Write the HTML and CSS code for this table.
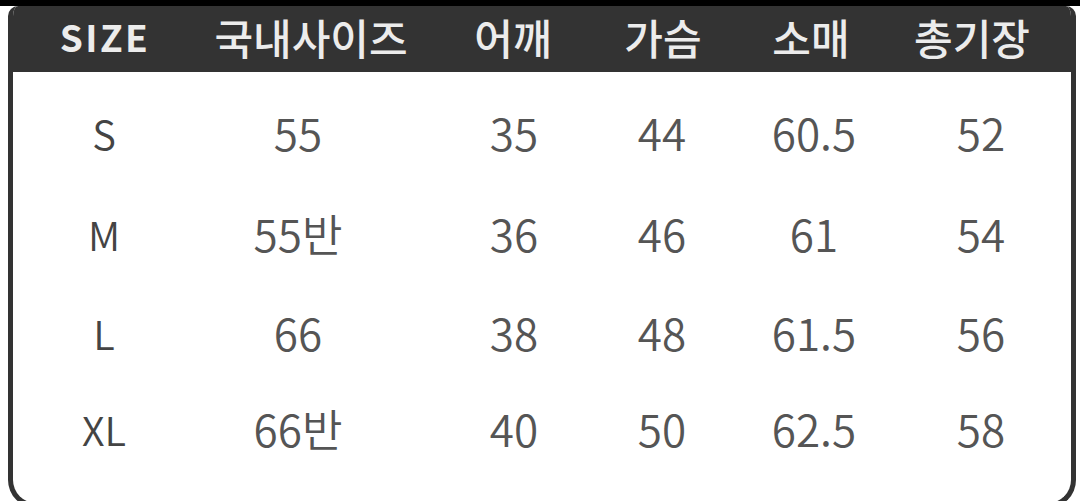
FILE: index.html
```html
<!DOCTYPE html>
<html lang="ko">
<head>
<meta charset="utf-8">
<title>Size chart</title>
<link rel="stylesheet" href="styles.css">
</head>
<body>
<div class="topbar"></div>
<div class="chart">
  <div class="head">
    <div class="hcell size">SIZE</div>
    <div class="hcell">국내사이즈</div>
    <div class="hcell">어깨</div>
    <div class="hcell">가슴</div>
    <div class="hcell">소매</div>
    <div class="hcell">총기장</div>
  </div>
  <div class="rows">
    <div class="row">
      <div class="cell label">S</div>
      <div class="cell">55</div>
      <div class="cell">35</div>
      <div class="cell">44</div>
      <div class="cell">60.5</div>
      <div class="cell">52</div>
    </div>
    <div class="row">
      <div class="cell label">M</div>
      <div class="cell">55반</div>
      <div class="cell">36</div>
      <div class="cell">46</div>
      <div class="cell">61</div>
      <div class="cell">54</div>
    </div>
    <div class="row">
      <div class="cell label">L</div>
      <div class="cell">66</div>
      <div class="cell">38</div>
      <div class="cell">48</div>
      <div class="cell">61.5</div>
      <div class="cell">56</div>
    </div>
    <div class="row">
      <div class="cell label">XL</div>
      <div class="cell">66반</div>
      <div class="cell">40</div>
      <div class="cell">50</div>
      <div class="cell">62.5</div>
      <div class="cell">58</div>
    </div>
  </div>
</div>
</body>
</html>
```

FILE: styles.css
```css
html, body {
  margin: 0;
  padding: 0;
  background: #ffffff;
  overflow: hidden;
}

body {
  width: 1080px;
  height: 501px;
  font-family: "Noto Sans CJK KR", "Noto Sans", sans-serif;
}

.topbar {
  height: 6px;
  background: #000000;
}

.chart {
  margin-left: 8px;
  width: 1058px;
  height: 497px;
  border: 5px solid #333333;
  border-top: 0;
  border-radius: 10px 10px 28px 28px;
  overflow: hidden;
  background: #ffffff;
}

.head {
  box-sizing: border-box;
  height: 66px;
  margin: 0 -5px;
  background: #333333;
  border-radius: 10px 10px 0 0;
  display: grid;
  grid-template-columns: 27px 140px 66px 140px 62px 140px 10px 140px 8px 140px 21px 140px;
  align-items: start;
}

.hcell {
  justify-self: center;
  color: #ececec;
  font-size: 42px;
  font-weight: 500;
  white-space: nowrap;
  line-height: normal;
}

.hcell.size {
  font-size: 37px;
  font-weight: 700;
  letter-spacing: 2.5px;
  padding-top: 3px;
}

.head .hcell:nth-child(1) { grid-column: 2; }
.head .hcell:nth-child(2) { grid-column: 4; }
.head .hcell:nth-child(3) { grid-column: 6; }
.head .hcell:nth-child(4) { grid-column: 8; }
.head .hcell:nth-child(5) { grid-column: 10; }
.head .hcell:nth-child(6) { grid-column: 12; }

.rows {
  padding-top: 11px;
  display: grid;
  grid-template-rows: 100px 102px 96px 96px;
}

.row {
  display: grid;
  grid-template-columns: 21px 140px 54px 140px 76px 140px 8px 140px 12px 140px 27px 140px;
  align-items: center;
}

.cell {
  justify-self: center;
  color: #555555;
  font-size: 44px;
  font-weight: 350;
  white-space: nowrap;
  line-height: 1.3;
}

.cell.label {
  color: #444444;
  font-size: 40px;
}

.row .cell:nth-child(1) { grid-column: 2; }
.row .cell:nth-child(2) { grid-column: 4; }
.row .cell:nth-child(3) { grid-column: 6; }
.row .cell:nth-child(4) { grid-column: 8; }
.row .cell:nth-child(5) { grid-column: 10; }
.row .cell:nth-child(6) { grid-column: 12; }
```
